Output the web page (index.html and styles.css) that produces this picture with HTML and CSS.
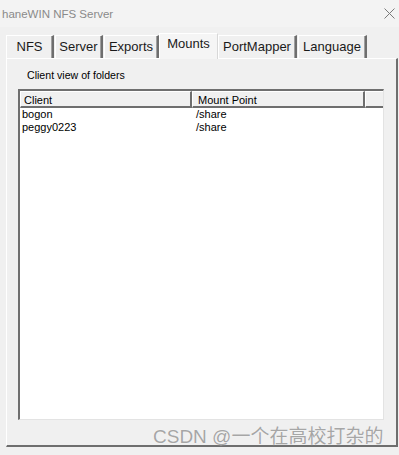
FILE: index.html
```html
<!DOCTYPE html>
<html lang="en">
<head>
    <meta charset="UTF-8">
    <title>haneWIN NFS Server</title>
    <link rel="stylesheet" href="styles.css">
</head>
<body>
    <div class="window">
        <div class="title-bar">
            <span class="title">haneWIN NFS Server</span>
            <svg class="close" width="11" height="11" viewBox="0 0 11 11">
                <path d="M0.5 0.5 L10.5 10.5 M10.5 0.5 L0.5 10.5" stroke="#7a7a7a" stroke-width="1" fill="none"/>
            </svg>
        </div>

        <div class="tabs">
            <div class="tab tab-nfs">NFS</div>
            <div class="tab tab-server">Server</div>
            <div class="tab tab-exports">Exports</div>
            <div class="tab tab-mounts active">Mounts</div>
            <div class="tab tab-port">PortMapper</div>
            <div class="tab tab-lang">Language</div>
        </div>

        <div class="panel">
            <p class="group-label">Client view of folders</p>
            <div class="list">
                <div class="list-head">
                    <div class="col col-client">Client</div>
                    <div class="col col-mount">Mount Point</div>
                    <div class="col col-rest"></div>
                </div>
                <div class="row">
                    <span class="cell cell-client">bogon</span>
                    <span class="cell">/share</span>
                </div>
                <div class="row">
                    <span class="cell cell-client">peggy0223</span>
                    <span class="cell">/share</span>
                </div>
            </div>
        </div>

        <div class="watermark">CSDN @一个在高校打杂的</div>
    </div>
</body>
</html>
```

FILE: styles.css
```css
body {
    margin: 0;
    background-color: #f0f0f0;
    font-family: 'Liberation Sans', Arial, sans-serif;
}
.window {
    position: relative;
    width: 399px;
    height: 455px;
    background-color: #f0f0f0;
    overflow: hidden;
}
.title-bar {
    display: flex;
    align-items: center;
    justify-content: space-between;
    height: 27px;
    padding: 0 4px 0 2px;
    background-color: #f3f3f3;
}
.title {
    font-size: 11.5px;
    color: #8a8a8a;
}

/* tab strip */
.tabs {
    display: flex;
    align-items: flex-end;
    height: 31px;
    margin-left: 6px;
    gap: 1px;
}
.tab {
    box-sizing: border-box;
    height: 23px;
    padding-top: 3px;
    text-align: center;
    font-size: 13px;
    color: #1a1a1a;
    background-color: #f0f0f0;
    border-top: 1px solid #ffffff;
    border-left: 1px solid #ffffff;
    border-right: 2px solid #6e6e6e;
    box-shadow: inset -1px 0 0 #a0a0a0;
}
.tab-nfs { width: 48px; }
.tab-server { width: 48px; }
.tab-exports { width: 55px; }
.tab-mounts { width: 59px; }
.tab-port { width: 79px; }
.tab-lang { width: 69px; }
.tab.active {
    position: relative;
    z-index: 1;
    height: 26px;
    margin-bottom: -1px;
    padding-top: 2px;
    margin-left: -1px;
    margin-right: -1px;
    background-color: #f5f5f5;
    border-right: 1px solid #d8d8d8;
    box-shadow: none;
}

/* panel */
.panel {
    box-sizing: border-box;
    width: 392px;
    height: 389px;
    margin-left: 6px;
    padding: 10px 12px 0 11px;
    background-color: #f0f0f0;
    border-top: 1px solid #ffffff;
    border-left: 1px solid #ffffff;
    border-right: 2px solid #6e6e6e;
    border-bottom: 2px solid #6e6e6e;
}
.group-label {
    margin: 0 0 8px 9px;
    font-size: 10.6px;
    color: #000;
}
.list {
    box-sizing: border-box;
    width: 366px;
    height: 331px;
    background-color: #ffffff;
    border-top: 2px solid #6f6f6f;
    border-left: 2px solid #6f6f6f;
    border-right: 1px solid #e3e3e3;
    border-bottom: 1px solid #e3e3e3;
}
.list-head {
    display: flex;
    height: 17px;
}
.col {
    box-sizing: border-box;
    height: 17px;
    padding: 2px 0 0 3px;
    font-size: 11px;
    background-color: #f0f0f0;
    border-top: 1px solid #ffffff;
    border-left: 1px solid #ffffff;
    border-right: 2px solid #6e6e6e;
    border-bottom: 2px solid #6e6e6e;
}
.col-client { width: 172px; }
.col-mount { width: 173px; padding-left: 5px; }
.col-rest { flex: 1; border-right: none; }
.row {
    display: flex;
    height: 13px;
    font-size: 11px;
    line-height: 13px;
}
.row:first-of-type {
    margin-top: 1px;
}
.cell-client {
    width: 174px;
    padding-left: 2px;
}

.watermark {
    position: absolute;
    left: 153px;
    top: 426px;
    font-family: 'Liberation Sans', 'Noto Sans CJK SC', sans-serif;
    font-size: 19px;
    line-height: 22px;
    color: #a6a6a6;
    text-shadow: 0 0 1px #ffffff;
}
```
